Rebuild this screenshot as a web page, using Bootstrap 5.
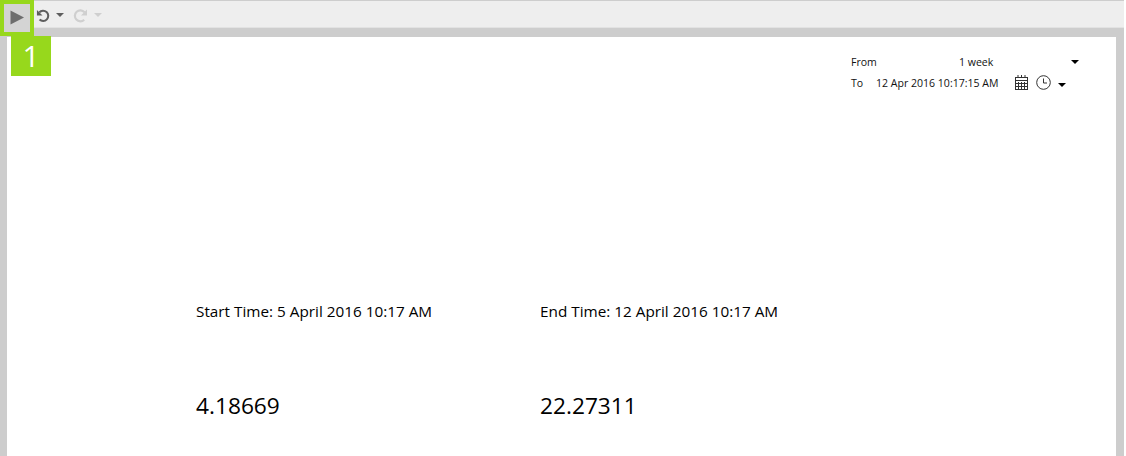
<!DOCTYPE html>
<html lang="en">
<head>
<meta charset="utf-8">
<title>Report</title>
<link href="https://cdn.jsdelivr.net/npm/bootstrap@5.3.0/dist/css/bootstrap.min.css" rel="stylesheet">
<style>
html,body{height:456px;overflow:hidden;background:#fff;font-family:"Open Sans","Noto Sans",sans-serif;color:#000}
.shell{width:1124px;height:456px;background:#cdcdcd;padding-top:1px}
.tools{height:27px;background:#eee;border-bottom:1px solid #e2e2e2;position:relative;padding-left:36px;padding-top:2px}
.run{position:absolute;left:0;top:-1px;width:34px;height:36px;background:#d4d4d4;border:4px solid #97d81c;display:flex;align-items:center;padding-left:6px;padding-bottom:2px;z-index:2}
.step{position:absolute;left:11px;top:36px;width:40px;height:40px;background:#97d81c;color:#fff;font-size:30px;line-height:40px;text-align:center;z-index:2;font-family:"Open Sans",sans-serif}
.sheet{margin:9px 8px 0 7px;height:419px;background:#fff;position:relative}
.range{font-size:10.55px;color:#111;padding:14px 0 0 844px;line-height:16px}
.rline{height:21px}
.lab{width:25px}
.wk{width:90px;margin-left:83px}
.stamp{width:132px}
.figs{padding:208px 0 0 189px}
.fcol{width:344px}
.cap{font-size:15.3px;line-height:20px;height:89px}
.num{font-size:22.7px;line-height:32px}
.tri{width:0;height:0;border-left:4px solid transparent;border-right:4px solid transparent;border-top:4px solid #000}
.tri-dim{border-top-color:#5e5e5e}
.tri-off{border-top-color:#cfcfcf}
.gap-a{margin-left:6px}
.gap-b{margin-left:9px}
.gap-c{margin-left:6px}
.gap-cal{margin-left:7px}
.gap-e{margin-left:8px}
.gap-f{margin-left:7px}
.gap-g{margin-left:22px}
.drop-a{margin-top:5px}
</style>
</head>
<body>
<div class="shell">
  <div class="tools d-flex align-items-center">
    <div class="run"><svg width="14" height="15" viewBox="0 0 14 15"><path d="M0.500 0.500 14 7.500 0.500 14.500z" fill="#6e6e6e"/></svg></div>
    <svg width="14" height="15" viewBox="0 0 15 15" fill="none" stroke="#5e5e5e" stroke-width="2.200"><path d="M3.500 4.200A5.500 5.500 0 1 1 3.800 11.800"/><path d="M1 1.500v6h6z" fill="#5e5e5e" stroke="none"/></svg>
    <span class="tri tri-dim gap-a"></span>
    <svg class="gap-b" width="15" height="15" viewBox="0 0 15 15" fill="none" stroke="#cfcfcf" stroke-width="2.200"><path d="M11.500 4.200A5.500 5.500 0 1 0 11.200 11.800"/><path d="M14 1.500v6h-6z" fill="#cfcfcf" stroke="none"/></svg>
    <span class="tri tri-off gap-c"></span>
  </div>
  <div class="step">1</div>
  <div class="sheet">
    <div class="range">
      <div class="rline d-flex align-items-center"><span class="lab">From</span><span class="wk">1 week</span><span class="tri gap-g"></span></div>
      <div class="rline d-flex align-items-center"><span class="lab">To</span><span class="stamp">12 Apr 2016 10:17:15 AM</span>
        <svg class="gap-cal" width="13" height="15" viewBox="0 0 13 15" fill="none" stroke="#333"><rect x=".5" y="2.500" width="12" height="12"/><path d="M0 5.500h13M3 0v3M6.500 0v3M10 0v3M3.500 7v7M6.500 7v7M9.500 7v7M1 8.500h11M1 11.500h11"/></svg>
        <svg class="gap-e" width="15" height="15" viewBox="0 0 15 15" fill="none" stroke="#333"><circle cx="7.500" cy="7.500" r="6.800"/><path d="M7.500 3.500v4.500h3.500"/></svg>
        <span class="tri gap-f drop-a"></span></div>
    </div>
    <div class="figs d-flex">
      <div class="fcol"><div class="cap">Start Time: 5 April 2016 10:17 AM</div><div class="num">4.18669</div></div>
      <div class="fcol"><div class="cap">End Time: 12 April 2016 10:17 AM</div><div class="num">22.27311</div></div>
    </div>
  </div>
</div>
</body>
</html>
